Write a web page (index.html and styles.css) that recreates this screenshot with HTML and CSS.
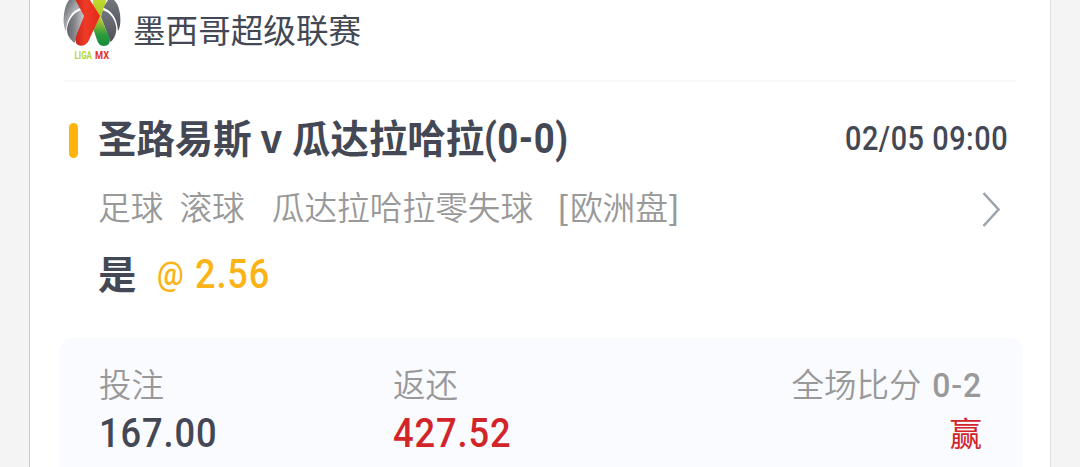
FILE: index.html
```html
<!DOCTYPE html>
<html lang="zh-CN">
<head>
  <meta charset="UTF-8" />
  <meta name="viewport" content="width=device-width, initial-scale=1.0"/>
  <title>投注记录</title>
  <link rel="stylesheet" href="styles.css">
</head>
<body>
  <div class="card">
    <div class="league">
      <svg class="league-logo" width="58" height="62" viewBox="0 0 58 62">
        <defs>
          <linearGradient id="silver" x1="0" y1="0" x2="1" y2="1">
            <stop offset="0" stop-color="#55565c"/>
            <stop offset="0.5" stop-color="#b0b1b6"/>
            <stop offset="1" stop-color="#4a4b51"/>
          </linearGradient>
          <linearGradient id="leaf" x1="0" y1="0" x2="1" y2="0">
            <stop offset="0" stop-color="#62646b"/>
            <stop offset="0.45" stop-color="#85878d"/>
            <stop offset="1" stop-color="#c9cace"/>
          </linearGradient>
          <linearGradient id="steel" x1="0" y1="0" x2="0" y2="1">
            <stop offset="0" stop-color="#74767d"/>
            <stop offset="1" stop-color="#505158"/>
          </linearGradient>
          <linearGradient id="green" x1="0" y1="0" x2="0" y2="1">
            <stop offset="0" stop-color="#c2d82e"/>
            <stop offset="0.45" stop-color="#a9c52c"/>
            <stop offset="0.75" stop-color="#2c9c3f"/>
            <stop offset="1" stop-color="#178a3a"/>
          </linearGradient>
          <linearGradient id="red" x1="0" y1="0" x2="1" y2="0">
            <stop offset="0" stop-color="#c9251d"/>
            <stop offset="0.4" stop-color="#ee3b26"/>
            <stop offset="1" stop-color="#e4271b"/>
          </linearGradient>
        </defs>
        <path fill="url(#silver)" d="M6 0H13L18 7.5C9 11 4 18 3 31C1 28 0 22 1 14C2 8 3 4 6 0Z"/>
        <path fill="url(#steel)" d="M51 0H45L40 7.5C49 11 54 18 55 31C57 28 58 22 57 14C56 8 55 4 51 0Z"/>
        <path fill="url(#leaf)" d="M18.5 10L21 16L11.5 43C5 38 3 32 4.5 26C7 17 12 12 18.5 10Z"/>
        <path fill="url(#steel)" d="M39.5 10L38 17L47.5 42C52 38 54 32 53 26C51 17 46 12 39.5 10Z"/>
        <path fill="url(#green)" d="M30 0H43.5L40 10L37.5 17L46.5 38C48 43 45 46 41 46C37 46 35 43 34 40L28.5 24Z"/>
        <path fill="url(#red)" d="M12.5 0H27L37 16L26 40C24 45 19 47 15 45C12 43 12 39 13.5 35L21 16Z"/>
        <text class="logo-text" x="11.5" y="59" textLength="17.5" lengthAdjust="spacingAndGlyphs" fill="#b9d532">LIGA</text>
        <text class="logo-text" x="32" y="59" textLength="14" lengthAdjust="spacingAndGlyphs" fill="#df3029">MX</text>
      </svg>
      <span class="league-name">墨西哥超级联赛</span>
    </div>

    <div class="match">
      <div class="marker"></div>
      <div class="match-title">圣路易斯 <span class="versus">v</span> 瓜达拉哈拉<span class="num match-score">(0-0)</span></div>
      <div class="num match-time">02/05 09:00</div>
    </div>

    <div class="market">
      <span>足球</span>
      <span class="market-type">滚球</span>
      <span class="market-name">瓜达拉哈拉零失球</span>
      <span class="market-odds"><span class="bracket">[</span>欧洲盘<span class="bracket">]</span></span>
      <svg class="arrow" width="20" height="38" viewBox="0 0 20 38">
        <path d="M2.5 3L17.5 19.5L2.5 36" fill="none" stroke="#9da3ae" stroke-width="2.6"/>
      </svg>
    </div>

    <div class="pick">
      <span class="pick-name">是</span>
      <span class="num at">@</span>
      <span class="num odds">2.56</span>
    </div>

    <div class="summary">
      <div class="stake">
        <div class="label">投注</div>
        <div class="num amount">167.00</div>
      </div>
      <div class="payout">
        <div class="label">返还</div>
        <div class="num amount win">427.52</div>
      </div>
      <div class="result">
        <div class="label">全场比分 <span class="num final-score">0-2</span></div>
        <div class="outcome">赢</div>
      </div>
    </div>
  </div>
</body>
</html>
```

FILE: styles.css
```css
body {
  margin: 0;
  height: 467px;
  overflow: hidden;
  font-family: "Noto Sans CJK SC", sans-serif;
  background-color: #f4f4f4;
  color: #434854;
}

.card {
  box-sizing: border-box;
  width: 1022px;
  height: 467px;
  margin-left: 29px;
  padding: 0 27px 0 29px;
  border-left: 1px solid #c8cccd;
  border-right: 1px solid #e0e1e2;
  background-color: #fff;
  overflow: hidden;
}

.num {
  display: inline-block;
  font-family: Roboto, sans-serif;
  font-weight: 500;
  transform-origin: left center;
  white-space: nowrap;
}

.league {
  display: flex;
  height: 80px;
  margin: 0 7px 0 4px;
  border-bottom: 2px solid #f9f9fa;
}

.league-logo {
  flex: none;
}

.logo-text {
  font-family: Roboto, sans-serif;
  font-size: 10px;
  font-weight: 700;
}

.league-name {
  margin-left: 12px;
  font-size: 32.6px;
  line-height: 58px;
}

.match {
  display: flex;
  height: 76px;
  padding: 20px 15px 0 10px;
  box-sizing: border-box;
}

.marker {
  width: 9px;
  height: 35px;
  margin: 21px 20px 0 0;
  border-radius: 5px;
  background-color: #ffb30d;
}

.match-title {
  flex: 1;
  font-size: 38.4px;
  font-weight: 700;
  line-height: 68px;
  white-space: nowrap;
}

.versus {
  margin: 0 1px 0 0;
}

.match-score {
  font-size: 42px;
  font-weight: 700;
  line-height: 60px;
  letter-spacing: 0.6px;
  transform: scaleX(0.87);
}

.match-time {
  width: 163px;
  font-size: 33px;
  line-height: 73px;
  letter-spacing: 0.6px;
  transform: scaleX(0.875);
}

.market {
  display: flex;
  align-items: center;
  height: 94px;
  padding: 0 22px 0 39px;
  font-size: 32.7px;
  font-weight: 350;
  color: #999;
}

.market-type {
  margin-left: 16px;
}

.market-name {
  margin-left: 27px;
}

.market-odds {
  margin-left: 24px;
}

.bracket {
  font-weight: 500;
  letter-spacing: 1px;
}

.arrow {
  margin: 8px 0 0 auto;
}

.pick {
  display: flex;
  align-items: center;
  height: 84px;
  padding-left: 39px;
  margin-top: -20px;
}

.pick-name {
  padding-bottom: 5px;
  font-size: 38.4px;
  font-weight: 700;
}

.at {
  width: 38px;
  margin-left: 21px;
  padding-bottom: 2px;
  font-size: 33px;
  color: #fcb316;
  transform: scaleX(0.9);
}

.odds {
  font-size: 41px;
  letter-spacing: 1px;
  color: #fcb316;
  transform: scaleX(0.88);
}

.summary {
  display: flex;
  height: 180px;
  margin-top: 22px;
  padding: 20px 41px 0 40px;
  border-radius: 14px;
  background-color: #fafbff;
}

.stake, .payout {
  width: 294px;
}

.result {
  margin-left: auto;
  text-align: right;
}

.label {
  font-size: 32.5px;
  font-weight: 350;
  line-height: 50px;
  height: 50px;
  color: #999;
  white-space: nowrap;
}

.amount {
  font-size: 41px;
  line-height: 50px;
  letter-spacing: 1px;
  transform: scaleX(0.885);
}

.win {
  color: #d12529;
}

.final-score {
  font-size: 34px;
  line-height: 48px;
  letter-spacing: 1px;
  transform: scaleX(0.94);
  transform-origin: right center;
}

.outcome {
  font-size: 32.5px;
  line-height: 47px;
  color: #d12529;
}
```
